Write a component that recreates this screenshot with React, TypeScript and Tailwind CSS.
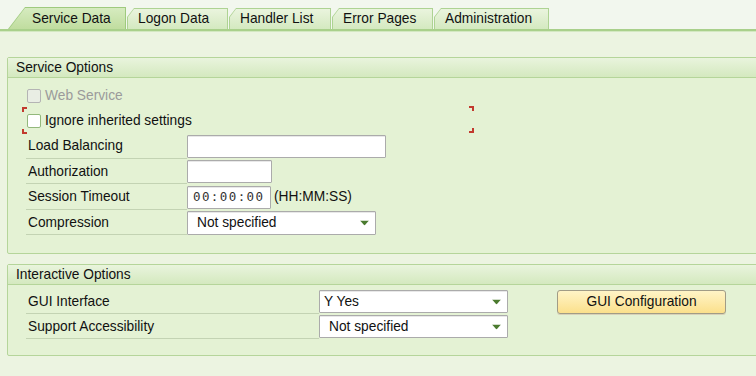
import React from "react";

const tabs = [
  { label: "Logon Data", w: "w-[101px]" },
  { label: "Handler List", w: "w-[102px]" },
  { label: "Error Pages", w: "w-[101px]" },
  { label: "Administration", w: "w-[115px]" },
];

function Arrow() {
  return (
    <svg width="9" height="5" viewBox="0 0 9 5" className="absolute right-[6px] top-1/2 -translate-y-1/2">
      <path d="M0 0 H9 L4.5 5 Z" fill="#4b7b2f" />
    </svg>
  );
}

function Field({ w, children, h = "h-[23px]" }: { w: string; children?: React.ReactNode; h?: string }) {
  return (
    <div className={`${w} ${h} relative flex items-center bg-white border border-[#ababab] rounded-[1px] shadow-[inset_0_1px_0_#e8e8e8]`}>
      {children}
    </div>
  );
}

function Label({ w, text }: { w: string; text: string }) {
  return (
    <div className={`${w} h-full flex items-center pl-[2px] pt-[2px] border-b border-[#c3d3b3]`}>{text}</div>
  );
}

function Group({ title, children, className = "" }: { title: string; children: React.ReactNode; className?: string }) {
  return (
    <div className={`w-[800px] border border-[#b5d59a] rounded-[2px] bg-[#e4f2d4] ${className}`}>
      <div className="h-[20px] leading-[19px] pl-[8px] border-b border-[#b5d59a] bg-gradient-to-b from-[#e9f4dd] to-[#d4e9bf]">
        {title}
      </div>
      {children}
    </div>
  );
}

export default function App() {
  return (
    <div className="w-[756px] h-[376px] overflow-hidden bg-[#ecf4e1] text-[13.75px] text-[#111] font-['Liberation_Sans',Arial,sans-serif]">
      {/* Tab strip */}
      <div className="h-[29px] bg-[#f2f7ee] flex items-end pl-[8px]">
        <div className="relative w-[118px] h-[22px] bg-[#9fca7e] [clip-path:polygon(17px_0,100%_0,100%_100%,0_100%)]">
          <div className="absolute left-[1px] right-[1px] top-[1px] bottom-0 bg-gradient-to-b from-[#d6ebbf] to-[#c0dd9f] [clip-path:polygon(16px_0,100%_0,100%_100%,0_100%)] flex items-center pl-[23px] pt-[1px]">
            Service Data
          </div>
        </div>
        {tabs.map((t) => (
          <div key={t.label} className={`relative ${t.w} h-[21px] ml-[1px] bg-[#aed393] [clip-path:polygon(7px_0,100%_0,100%_100%,0_100%,0_9px)]`}>
            <div className="absolute left-[1px] right-[1px] top-[1px] bottom-0 bg-gradient-to-b from-[#eaf4de] to-[#d4e9c0] [clip-path:polygon(6px_0,100%_0,100%_100%,0_100%,0_8px)] flex items-center pl-[10px] pt-[1px]">
              {t.label}
            </div>
          </div>
        ))}
      </div>
      <div className="h-[2px] bg-[#a9d08b]" />
      <div className="h-[1px] bg-[#d3e8c1]" />

      <div className="pl-[7px] pt-[25px]">
        <Group title="Service Options">
          <div className="pl-[18px] pt-[5px] pb-[18px]">
            <div className="h-[25px] flex items-center">
              <div className="ml-[1px] w-[14px] h-[14px] border border-[#b4b4b4] rounded-[2px] bg-[#e9eee4]" />
              <span className="ml-[4px] pt-[1px] text-[#9b9b9b]">Web Service</span>
            </div>
            <div className="h-[25px] flex items-center relative w-[448px]">
              <div className="ml-[1px] w-[14px] h-[14px] border border-[#93b87c] rounded-[2px] bg-white" />
              <span className="ml-[4px] pt-[1px]">Ignore inherited settings</span>
              <div className="absolute left-[-4px] top-[-1px] w-[5px] h-[5px] border-l-2 border-t-2 border-[#c23a2e]" />
              <div className="absolute left-[-4px] bottom-[-1px] w-[5px] h-[5px] border-l-2 border-b-2 border-[#c23a2e]" />
              <div className="absolute right-0 top-[-2px] w-[5px] h-[5px] border-r-2 border-t-2 border-[#c23a2e]" />
              <div className="absolute right-0 bottom-[0px] w-[5px] h-[5px] border-r-2 border-b-2 border-[#c23a2e]" />
            </div>
            <div className="h-[26px] flex items-center">
              <Label w="w-[161px]" text="Load Balancing" />
              <Field w="w-[199px]" />
            </div>
            <div className="h-[25px] flex items-center">
              <Label w="w-[161px]" text="Authorization" />
              <Field w="w-[85px]" />
            </div>
            <div className="h-[26px] flex items-center">
              <Label w="w-[161px]" text="Session Timeout" />
              <Field w="w-[84px]">
                <span className="pl-[5px] pt-[1px] font-['DejaVu_Sans_Mono',monospace] text-[12.5px] tracking-[1.4px] text-[#333]">00:00:00</span>
              </Field>
              <span className="ml-[3px] pt-[1px]">(HH:MM:SS)</span>
            </div>
            <div className="h-[25px] flex items-center">
              <Label w="w-[161px]" text="Compression" />
              <Field w="w-[189px]" h="h-[24px]">
                <span className="pl-[9px] pt-[1px]">Not specified</span>
                <Arrow />
              </Field>
            </div>
          </div>
        </Group>

        <Group title="Interactive Options" className="mt-[10px]">
          <div className="pl-[18px] pt-[4px] pb-[16px]">
            <div className="h-[25px] flex items-center">
              <Label w="w-[293px]" text="GUI Interface" />
              <Field w="w-[189px]">
                <span className="pl-[4px] pt-[1px]">Y Yes</span>
                <Arrow />
              </Field>
              <button className="ml-[49px] w-[169px] h-[24px] pt-[1px] rounded-[3px] border border-[#a19c86] bg-gradient-to-b from-[#fff4c6] to-[#fbe08b] text-[#111] shadow-[0_1px_0_#d8d2b8]">
                GUI Configuration
              </button>
            </div>
            <div className="h-[25px] flex items-center">
              <Label w="w-[293px]" text="Support Accessibility" />
              <Field w="w-[189px]">
                <span className="pl-[9px] pt-[1px]">Not specified</span>
                <Arrow />
              </Field>
            </div>
          </div>
        </Group>
      </div>
    </div>
  );
}
